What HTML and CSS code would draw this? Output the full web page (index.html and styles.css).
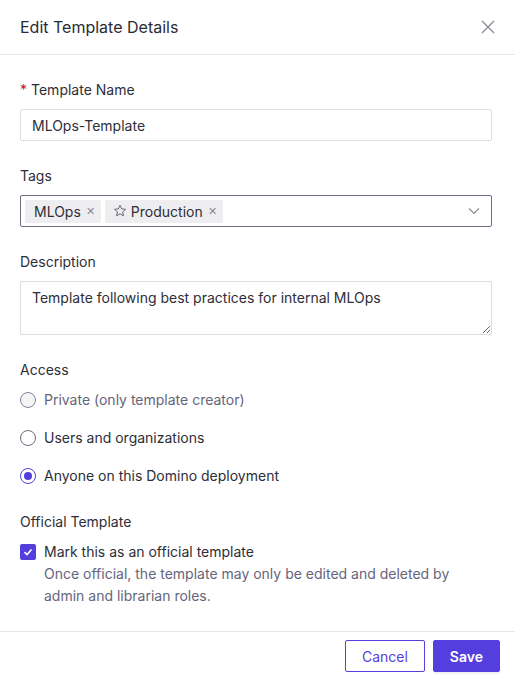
FILE: index.html
```html
<!DOCTYPE html>
<html lang="en">
<head>
    <meta charset="UTF-8">
    <meta name="viewport" content="width=device-width, initial-scale=1.0">
    <title>Edit Template Details</title>
    <link rel="stylesheet" href="styles.css">
</head>
<body>
    <div class="modal">
        <div class="modal-header">
            <h2 class="modal-title">Edit Template Details</h2>
            <button class="close-btn" aria-label="Close">
                <svg width="14" height="14" viewBox="0 0 14 14"><path d="M1 1L13 13M13 1L1 13" stroke="#8a8a96" stroke-width="1.3" fill="none"/></svg>
            </button>
        </div>

        <div class="modal-body">
            <div class="form-group">
                <label for="templateName"><span class="required">*</span>Template Name</label>
                <input type="text" id="templateName" value="MLOps-Template">
            </div>

            <div class="form-group">
                <label>Tags</label>
                <div class="tag-select">
                    <span class="tag">MLOps <span class="tag-close">&#x2715;</span></span>
                    <span class="tag">
                        <svg width="14" height="14" viewBox="0 0 16 16"><path d="M8 1.5l1.9 4.1 4.5.5-3.4 3 1 4.4L8 11.2l-3.9 2.3 1-4.4-3.4-3 4.5-.5z" fill="none" stroke="#55556a" stroke-width="1" stroke-linejoin="round"/></svg>
                        Production <span class="tag-close">&#x2715;</span>
                    </span>
                    <svg class="chevron" width="12" height="12" viewBox="0 0 12 12"><path d="M1 3.5L6 8.5L11 3.5" fill="none" stroke="#8a8a96" stroke-width="1.1"/></svg>
                </div>
            </div>

            <div class="form-group">
                <label for="description">Description</label>
                <textarea id="description">Template following best practices for internal MLOps</textarea>
            </div>

            <div class="form-group">
                <label>Access</label>
                <div class="radio-list">
                    <div class="radio-row disabled"><span class="radio"></span>Private (only template creator)</div>
                    <div class="radio-row"><span class="radio"></span>Users and organizations</div>
                    <div class="radio-row"><span class="radio checked"></span>Anyone on this Domino deployment</div>
                </div>
            </div>

            <div class="form-group last">
                <label>Official Template</label>
                <div class="check-row">
                    <span class="checkbox">
                        <svg width="10" height="10" viewBox="0 0 10 10"><path d="M1.5 5.2L4 7.5L8.5 2.5" fill="none" stroke="#fff" stroke-width="1.6"/></svg>
                    </span>
                    <div>
                        <div class="check-label">Mark this as an official template</div>
                        <div class="help-text">Once official, the template may only be edited and deleted by admin and librarian roles.</div>
                    </div>
                </div>
            </div>
        </div>

        <div class="modal-footer">
            <button class="btn btn-cancel">Cancel</button>
            <button class="btn btn-save">Save</button>
        </div>
    </div>
</body>
</html>
```
FILE: styles.css
```css
body {
    margin: 0;
    font-family: Inter, "Noto Sans", sans-serif;
    font-size: 14px;
    color: #2e2e38;
    background-color: white;
}
.modal {
    width: 515px;
    background-color: white;
}
.modal-header {
    height: 54px;
    display: flex;
    align-items: center;
    justify-content: space-between;
    padding: 0 20px;
    border-bottom: 1px solid #e6e6ea;
}
.modal-title {
    margin: 0;
    font-size: 16px;
    font-weight: 400;
    color: #2b2b36;
}
.close-btn {
    border: none;
    background: none;
    padding: 0;
    display: flex;
    cursor: pointer;
}
.modal-body {
    padding: 24px 23px 24px 20px;
}
.form-group {
    margin-bottom: 24px;
}
.form-group.last {
    margin-bottom: 0;
}
label {
    display: block;
    line-height: 22px;
    margin-bottom: 8px;
    color: #2e2e38;
}
.required {
    color: #c8102e;
    margin-right: 4px;
}
input[type="text"] {
    width: 100%;
    height: 32px;
    box-sizing: border-box;
    padding: 0 11px;
    border: 1px solid #dcdce2;
    border-radius: 2px;
    font-family: inherit;
    font-size: 14px;
    color: #2e2e38;
}
.tag-select {
    height: 32px;
    box-sizing: border-box;
    border: 1px solid #6d6c80;
    border-radius: 2px;
    display: flex;
    align-items: center;
    gap: 4px;
    padding: 0 11px 0 4px;
}
.tag {
    display: flex;
    align-items: center;
    gap: 4px;
    height: 23px;
    padding: 0 6px 0 9px;
    background-color: #eeeef1;
    border-radius: 2px;
    color: #2e2e38;
}
.tag svg {
    margin-left: -1px;
}
.tag-close {
    font-size: 11px;
    color: #8a8a96;
    margin-left: 1px;
}
.chevron {
    margin-left: auto;
}
textarea {
    display: block;
    width: 100%;
    height: 54px;
    box-sizing: border-box;
    padding: 5px 11px;
    border: 1px solid #dcdce2;
    border-radius: 2px;
    font-family: inherit;
    font-size: 14px;
    line-height: 22px;
    color: #2e2e38;
}
.radio-list {
    display: flex;
    flex-direction: column;
    gap: 16px;
}
.radio-row {
    display: flex;
    align-items: center;
    gap: 8px;
    line-height: 22px;
    color: #2e2e38;
}
.radio-row.disabled {
    color: #65657b;
}
.radio {
    width: 16px;
    height: 16px;
    box-sizing: border-box;
    border: 1px solid #6d6c80;
    border-radius: 50%;
    background-color: white;
    display: flex;
    align-items: center;
    justify-content: center;
}
.radio-row.disabled .radio {
    background-color: #f4f4f6;
    border-color: #85849a;
}
.radio.checked {
    border-color: #543fde;
}
.radio.checked::after {
    content: "";
    width: 8px;
    height: 8px;
    border-radius: 50%;
    background-color: #543fde;
}
.check-row {
    display: flex;
    gap: 8px;
    line-height: 22px;
}
.checkbox {
    flex: none;
    width: 16px;
    height: 16px;
    margin-top: 3px;
    background-color: #543fde;
    border-radius: 2px;
    display: flex;
    align-items: center;
    justify-content: center;
}
.help-text {
    color: #65657b;
}
.modal-footer {
    border-top: 1px solid #e6e6ea;
    display: flex;
    justify-content: flex-end;
    gap: 8px;
    padding: 8px 15px 8px 20px;
}
.btn {
    height: 32px;
    padding: 0 16px;
    border-radius: 2px;
    font-family: inherit;
    font-size: 14px;
    cursor: pointer;
}
.btn-cancel {
    background-color: white;
    border: 1px solid #543fde;
    color: #543fde;
}
.btn-save {
    background-color: #543fde;
    border: 1px solid #543fde;
    color: white;
    font-weight: 600;
    box-shadow: 0 2px 0 rgba(0,0,0,0.05);
}
```
